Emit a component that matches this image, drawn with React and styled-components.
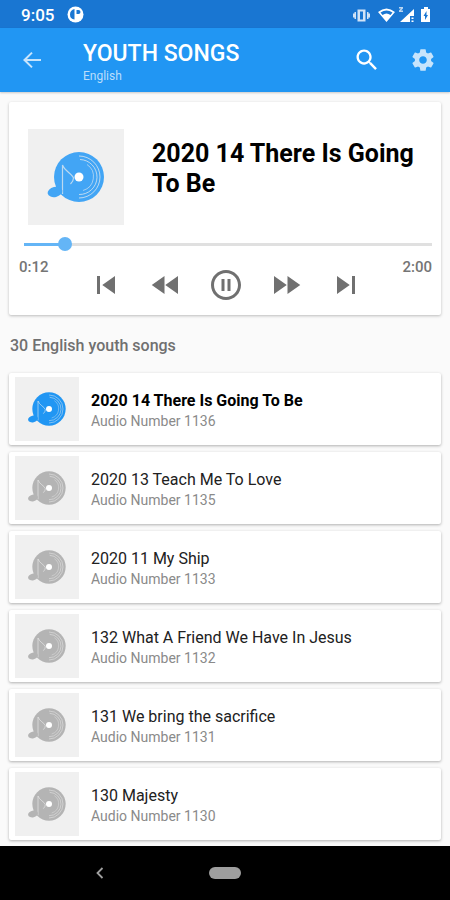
import React, { useState } from 'react';
import styled, { createGlobalStyle } from 'styled-components';

const songs = [
    { id: 1136, title: '2020 14 There Is Going To Be' },
    { id: 1135, title: '2020 13 Teach Me To Love' },
    { id: 1133, title: '2020 11 My Ship' },
    { id: 1132, title: '132 What A Friend We Have In Jesus' },
    { id: 1131, title: '131 We bring the sacrifice' },
    { id: 1130, title: '130 Majesty' },
];

const DURATION = 120;

const formatTime = (seconds) =>
    `${Math.floor(seconds / 60)}:${String(seconds % 60).padStart(2, '0')}`;

const Icon = ({ d, size = 24 }) => (
    <svg
        width={size}
        height={size}
        viewBox='0 0 24 24'
        fill='currentColor'
        aria-hidden='true'
    >
        <path d={d} />
    </svg>
);

const icons = {
    back: 'M21 11H7L12.700 5.300L11.300 3.900L3 12l8.300 8.100l1.400 -1.400L7 13H21z',
    search: 'M15.5 14h-.79l-.28-.27C15.41 12.59 16 11.11 16 9.5 16 5.91 13.09 3 9.5 3S3 5.91 3 9.5 5.91 16 9.5 16c1.61 0 3.09-.59 4.23-1.57l.27.28v.79l5 4.99L20.49 19l-4.99-5zm-6 0C7.01 14 5 11.99 5 9.5S7.01 5 9.5 5 14 7.01 14 9.5 11.99 14 9.5 14z',
    settings:
        'M19.43 12.98c.04-.32.07-.64.07-.98s-.03-.66-.07-.98l2.11-1.65c.19-.15.24-.42.12-.64l-2-3.46c-.12-.22-.39-.3-.61-.22l-2.49 1c-.52-.4-1.08-.73-1.69-.98l-.38-2.65C14.46 2.18 14.25 2 14 2h-4c-.25 0-.46.18-.49.42l-.38 2.65c-.61.25-1.17.59-1.69.98l-2.49-1c-.23-.09-.49 0-.61.22l-2 3.46c-.13.22-.07.49.12.64l2.11 1.65c-.04.32-.07.65-.07.98s.03.66.07.98l-2.11 1.65c-.19.15-.24.42-.12.64l2 3.46c.12.22.39.3.61.22l2.49-1c.52.4 1.08.73 1.69.98l.38 2.65c.03.24.24.42.49.42h4c.25 0 .46-.18.49-.42l.38-2.65c.61-.25 1.17-.59 1.69-.98l2.49 1c.23.09.49 0 .61-.22l2-3.46c.12-.22.07-.49-.12-.64l-2.11-1.65zM12 15.5c-1.93 0-3.5-1.57-3.5-3.5s1.57-3.5 3.5-3.5 3.5 1.57 3.5 3.5-1.57 3.5-3.5 3.5z',
    previous: 'M6 6h2v12H6zm3.5 6l8.5 6V6z',
    rewind: 'M11 18V6l-8.5 6 8.5 6zm.5-6l8.5 6V6l-8.5 6z',
    pause: 'M9 16h2V8H9v8zm3-14C6.48 2 2 6.48 2 12s4.48 10 10 10 10-4.48 10-10S17.52 2 12 2zm0 18c-4.41 0-8-3.59-8-8s3.59-8 8-8 8 3.59 8 8-3.59 8-8 8zm1-4h2V8h-2v8z',
    play: 'M10 16.5l6-4.5-6-4.5v9zM12 2C6.48 2 2 6.48 2 12s4.48 10 10 10 10-4.48 10-10S17.52 2 12 2zm0 18c-4.41 0-8-3.59-8-8s3.59-8 8-8 8 3.59 8 8-3.59 8-8 8z',
    forward: 'M4 18l8.5-6L4 6v12zm9-12v12l8.5-6L13 6z',
    next: 'M6 18l8.5-6L6 6v12zM16 6v12h2V6h-2z',
};

const Record = () => (
    <svg width='100%' height='100%' viewBox='0 0 96 96' aria-hidden='true'>
        <circle cx='51' cy='48' r='25' fill='currentColor' />
        <g fill='none' stroke='#f0f0f0' strokeOpacity='0.7'>
            <path d='M51 27a21 21 0 0 1 0 42' strokeWidth='1' />
            <path d='M52 30.500a17.500 17.500 0 0 1 -1 35' strokeWidth='1' />
            <path d='M59 35.500a14.500 14.500 0 0 1 -4 26' strokeWidth='0.800' />
            <path d='M34.500 65V36c2 6 10 9 11 13q0 3 -3 6' strokeWidth='1.200' />
        </g>
        <circle cx='51' cy='48' r='4.500' fill='#fff' />
        <ellipse
            cx='27'
            cy='63'
            rx='7.500'
            ry='5'
            fill='currentColor'
            transform='rotate(-12 27 63)'
        />
    </svg>
);

const StatusIcons = () => (
    <svg width='80' height='18' viewBox='0 0 80 18' fill='#fff' aria-hidden='true'>
        <g fillOpacity='0.8'>
            <path d='M4 6v7H2.500V11.500H1v-4h1.500V6zM15 6v7h1.500v-1.500H18v-4h-1.500V6z' />
            <path fillRule='evenodd' d='M5.500 3.500h8v12h-8zM8 5.500v8h3v-8z' />
        </g>
        <path
            fillRule='evenodd'
            d='M26 6Q34.500 -1 43 6L34.500 16zM28.500 6.500L30.500 9Q34.500 6 38.500 9L40.500 6.500Q34.500 2.500 28.500 6.500z'
        />
        <path d='M62 3v7h-4v6H48zM59.500 11.500h2v1.500h-2zM59.500 14.500h2v1.500h-2z' />
        <path d='M47 1h4v1.500l-2 2h2V6h-4V4.500l2 -2h-2z' fillOpacity='0.7' />
        <path
            fillRule='evenodd'
            d='M72 1h4v2h2v13h-9V3h3zM74.500 5L71.500 10h1.500v4L76 9h-1.500z'
        />
    </svg>
);

const App = () => {
    const [position, setPosition] = useState(12);
    const [current, setCurrent] = useState(0);
    const [playing, setPlaying] = useState(true);

    const seek = (value) =>
        setPosition(Math.max(0, Math.min(DURATION, value)));
    const select = (index) => {
        setCurrent(Math.max(0, Math.min(songs.length - 1, index)));
        setPosition(0);
    };

    return (
        <Screen>
            <GlobalStyle />
            <StatusBar>
                <span>9:05</span>
                <svg width='17' height='17' viewBox='0 0 17 17' aria-hidden='true'>
                    <circle cx='8.500' cy='8.500' r='8' fill='#fff' />
                    <path
                        d='M7.500 3v10.500Q3 13 3 8.500T7.500 3zM9.500 4h2q2 0 2 2t-2 2h-2z'
                        fill='#1976d2'
                    />
                </svg>
                <StatusRight>
                    <StatusIcons />
                </StatusRight>
            </StatusBar>
            <AppBar>
                <BarButton aria-label='Back' $faded>
                    <Icon d={icons.back} />
                </BarButton>
                <Heading>
                    <h1>YOUTH SONGS</h1>
                    <p>English</p>
                </Heading>
                <BarButton aria-label='Search'>
                    <Icon d={icons.search} size={28} />
                </BarButton>
                <BarButton aria-label='Settings' $faded>
                    <Icon d={icons.settings} size={26} />
                </BarButton>
            </AppBar>
            <Content>
                <Player>
                    <NowPlaying>
                        <Cover $size={96} $color='#42a5f5'>
                            <Record />
                        </Cover>
                        <h2>{songs[current].title}</h2>
                    </NowPlaying>
                    <Slider
                        type='range'
                        min='0'
                        max={DURATION}
                        value={position}
                        aria-label='Position'
                        onChange={(e) => seek(Number(e.target.value))}
                        style={{ '--played': `${(position / DURATION) * 100}%` }}
                    />
                    <Transport>
                        <Time>{formatTime(position)}</Time>
                        <Controls>
                            <ControlButton
                                aria-label='Previous'
                                onClick={() => select(current - 1)}
                            >
                                <Icon d={icons.previous} size={36} />
                            </ControlButton>
                            <ControlButton
                                aria-label='Rewind'
                                onClick={() => seek(position - 10)}
                            >
                                <Icon d={icons.rewind} size={36} />
                            </ControlButton>
                            <ControlButton
                                aria-label={playing ? 'Pause' : 'Play'}
                                onClick={() => setPlaying(!playing)}
                            >
                                <Icon
                                    d={playing ? icons.pause : icons.play}
                                    size={36}
                                />
                            </ControlButton>
                            <ControlButton
                                aria-label='Fast forward'
                                onClick={() => seek(position + 10)}
                            >
                                <Icon d={icons.forward} size={36} />
                            </ControlButton>
                            <ControlButton
                                aria-label='Next'
                                onClick={() => select(current + 1)}
                            >
                                <Icon d={icons.next} size={36} />
                            </ControlButton>
                        </Controls>
                        <Time>{formatTime(DURATION)}</Time>
                    </Transport>
                </Player>
                <Count>30 English youth songs</Count>
                <SongList>
                    {songs.map(({ id, title }, index) => (
                        <li key={id}>
                            <SongButton onClick={() => select(index)}>
                                <Cover
                                    $size={64}
                                    $color={
                                        index === current ? '#2196f3' : '#b4b4b4'
                                    }
                                >
                                    <Record />
                                </Cover>
                                <SongText>
                                    <SongTitle $active={index === current}>
                                        {title}
                                    </SongTitle>
                                    <SongNumber>Audio Number {id}</SongNumber>
                                </SongText>
                            </SongButton>
                        </li>
                    ))}
                </SongList>
            </Content>
            <NavBar>
                <NavButton aria-label='System back'>
                    <svg width='10' height='14' viewBox='0 0 10 14' aria-hidden='true'>
                        <path
                            d='M7.500 2L2.500 7l5 5'
                            fill='none'
                            stroke='#a0a0a0'
                            strokeWidth='1.800'
                        />
                    </svg>
                </NavButton>
                <HomePill aria-label='Home' />
                <span />
            </NavBar>
        </Screen>
    );
};

export default App;

const GlobalStyle = createGlobalStyle`
    * {
        box-sizing: border-box;
    }

    body {
        margin: 0;
        background-color: #fafafa;
        font-family: Roboto, 'Liberation Sans', sans-serif;
    }

    h1, h2, p, ul {
        margin: 0;
        padding: 0;
    }

    button {
        border: 0;
        padding: 0;
        background: none;
        color: inherit;
        font: inherit;
        cursor: pointer;
    }
`;

const Screen = styled.div`
    display: flex;
    flex-direction: column;
    height: 100vh;
`;

const StatusBar = styled.div`
    flex: none;
    display: flex;
    align-items: center;
    gap: 13px;
    height: 28px;
    padding: 1px 18px 0 21px;
    background-color: #1976d2;
    color: #fff;
    font-size: 17px;
    font-weight: 500;
`;

const StatusRight = styled.div`
    display: flex;
    margin-left: auto;
`;

const AppBar = styled.header`
    flex: none;
    display: flex;
    align-items: center;
    gap: 16px;
    height: 64px;
    padding: 0 7px 0 12px;
    background-color: #2196f3;
    color: #fff;
    box-shadow: 0 1px 2px rgba(0, 0, 0, 0.2);
`;

const BarButton = styled.button`
    display: grid;
    place-items: center;
    width: 40px;
    height: 40px;
    opacity: ${({ $faded }) => ($faded ? 0.75 : 1)};
`;

const Heading = styled.div`
    flex: 1;
    padding: 4px 0 0 15px;

    h1 {
        font-size: 23px;
        font-weight: 500;
        line-height: 28px;
    }

    p {
        color: #bbdefb;
        font-size: 12px;
        line-height: 16px;
    }
`;

const Content = styled.main`
    flex: 1;
    min-height: 0;
    padding: 10px 9px 0;
    overflow-y: auto;
    scrollbar-width: none;
`;

const Player = styled.section`
    padding: 27px 2px 12px 8px;
    border-radius: 2px;
    background-color: #fff;
    box-shadow: 0 1px 3px rgba(0, 0, 0, 0.25);
`;

const NowPlaying = styled.div`
    display: flex;
    gap: 28px;
    padding: 0 8px 0 11px;

    h2 {
        flex: 1;
        padding-top: 10px;
        color: #000;
        font-size: 25px;
        font-weight: 700;
        line-height: 30px;
    }
`;

const Cover = styled.div`
    flex: none;
    width: ${({ $size }) => $size}px;
    height: ${({ $size }) => $size}px;
    background-color: #f0f0f0;
    color: ${({ $color }) => $color};

    svg {
        display: block;
    }
`;

const Slider = styled.input`
    appearance: none;
    display: block;
    width: 100%;
    height: 14px;
    margin: 12px 0 0;
    background: linear-gradient(
            to right,
            #64b5f6 var(--played),
            #e0e0e0 var(--played)
        )
        center / calc(100% - 14px) 3px no-repeat;
    cursor: pointer;

    &::-webkit-slider-thumb {
        appearance: none;
        width: 14px;
        height: 14px;
        border-radius: 50%;
        background-color: #64b5f6;
    }
`;

const Transport = styled.div`
    display: grid;
    grid-template-columns: auto 1fr auto;
    padding: 7px 7px 0 2px;
`;

const Time = styled.span`
    color: #757575;
    font-size: 15px;
    font-weight: 500;
    line-height: 18px;
`;

const Controls = styled.div`
    display: flex;
    justify-content: center;
    gap: 24px;
    padding-top: 9px;
    color: #707070;
`;

const ControlButton = styled.button`
    display: grid;
    place-content: center;
    width: 36px;
    height: 36px;
`;

const Count = styled.p`
    margin: 21px 1px 17px;
    color: #707070;
    font-size: 16px;
    font-weight: 500;
    line-height: 20px;
`;

const SongList = styled.ul`
    display: grid;
    gap: 7px;
    list-style: none;
`;

const SongButton = styled.button`
    display: flex;
    align-items: center;
    gap: 12px;
    width: 100%;
    height: 72px;
    padding: 0 6px;
    border-radius: 2px;
    background-color: #fff;
    box-shadow: 0 1px 3px rgba(0, 0, 0, 0.3);
    text-align: left;
`;

const SongText = styled.span`
    display: grid;
    padding-top: 3px;
`;

const SongTitle = styled.span`
    color: ${({ $active }) => ($active ? '#000' : '#212121')};
    font-size: 16px;
    font-weight: ${({ $active }) => ($active ? 700 : 400)};
    line-height: 20px;
`;

const SongNumber = styled.span`
    color: #8a8a8a;
    font-size: 14px;
    line-height: 20px;
`;

const NavBar = styled.nav`
    flex: none;
    display: grid;
    grid-template-columns: 1fr auto 1fr;
    align-items: center;
    height: 54px;
    background-color: #000;
`;

const NavButton = styled.button`
    display: grid;
    place-items: center;
    width: 40px;
    height: 40px;
    margin-left: 80px;
`;

const HomePill = styled.button`
    && {
        width: 32px;
        height: 12px;
        border-radius: 6px;
        background-color: #9e9e9e;
    }
`;
